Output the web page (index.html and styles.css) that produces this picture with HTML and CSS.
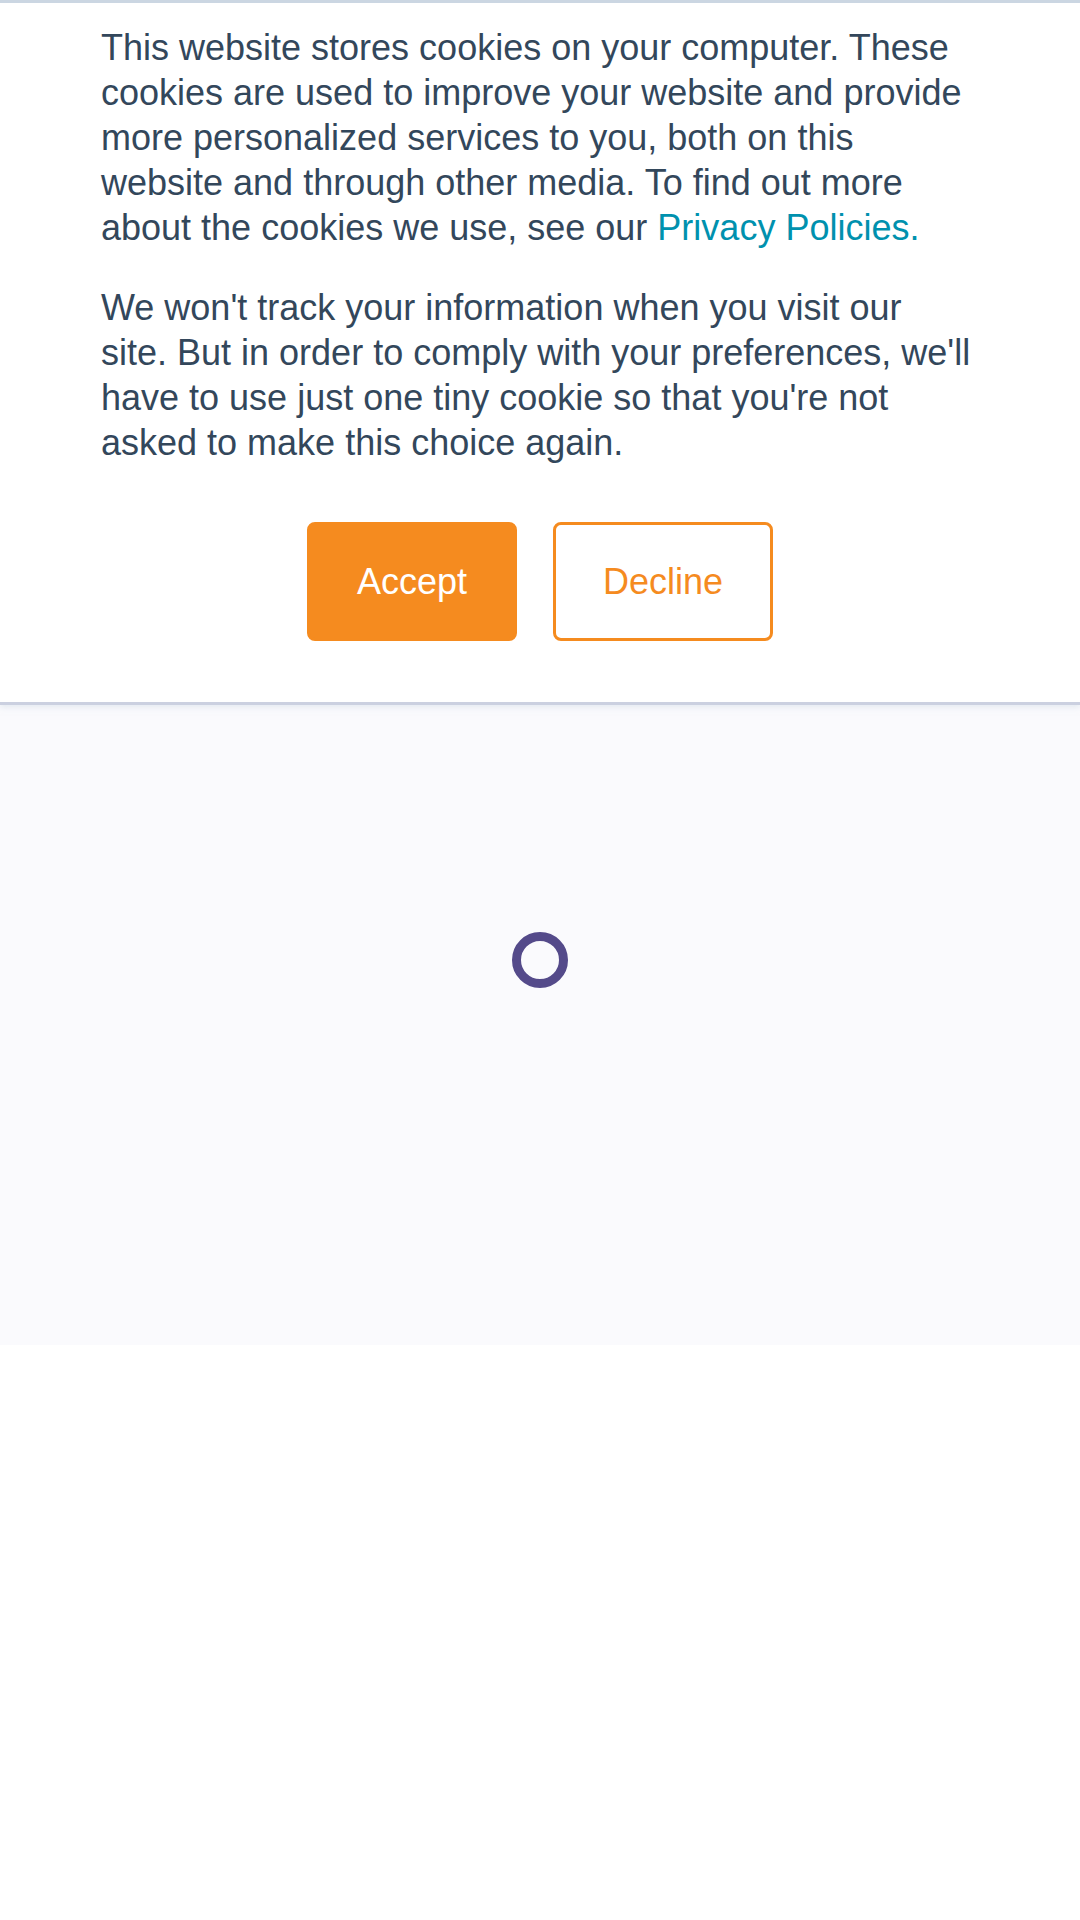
FILE: index.html
```html
<!doctype html>
<html>

<head>
    <meta charset="utf-8" />
    <meta name="viewport" content="width=device-width, initial-scale=1.0">
    <link rel="stylesheet" href="styles.css">
</head>

<body>

    <div class="main">

        <div class="cookie-banner" id="cookieBanner">
            <div class="cookie-inner">
                <p class="cookie-text">This website stores cookies on your computer. These cookies are used to improve
                    your website and provide more personalized services to you, both on this website and through other
                    media. To find out more about the cookies we use, see our <a class="link" href="#">Privacy
                        Policies.</a></p>
                <p class="cookie-text">We won't track your information when you visit our site. But in order to comply
                    with your preferences, we'll have to use just one tiny cookie so that you're not asked to make this
                    choice again.</p>
                <div class="buttons">
                    <a class="btn accept" href="#" id="acceptButton">Accept</a>
                    <a class="btn decline" href="#" id="declineButton">Decline</a>
                </div>
            </div>
        </div>

        <div class="loading-layer">
            <span class="loader"></span>
        </div>

    </div>

</body>

</html>
```

FILE: styles.css
```css
html,
body {

    margin: 0 0;
    height: 100%;
    font-family: "Liberation Sans", Arial, Helvetica, sans-serif;

}

body {

    margin: 0 0;
    background-color: white;

}

.main {
    margin: 0 0;
    background-color: white;
}

.main .cookie-banner {
    position: relative;
    z-index: 1;
    background-color: white;
    border-top: 3px solid #cbd6e2;
    border-bottom: 3px solid #cbd0e0;
    box-shadow: 0 2px 6px rgba(203, 214, 226, 0.5);
}

.main .cookie-banner .cookie-inner {
    padding: 22px 106px 61px 101px;
}

.main .cookie-banner .cookie-text {
    margin: 0 0 35px 0;
    font-size: 36px;
    line-height: 45px;
    color: #33475b;
}

.main .cookie-banner .cookie-text:last-of-type {
    margin-bottom: 0;
}

.main .cookie-banner .cookie-text .link {
    color: #0091ae;
    text-decoration: none;
}

.main .cookie-banner .buttons {
    display: flex;
    flex-direction: row;
    justify-content: center;
    gap: 36px;
    margin-top: 57px;
    padding-left: 5px;
}

.main .cookie-banner .buttons .btn {
    display: block;
    height: 113px;
    line-height: 113px;
    padding: 0 47px;
    font-size: 36px;
    border: 3px solid #f58b1f;
    border-radius: 8px;
    text-decoration: none;
}

.main .cookie-banner .buttons .accept {
    background-color: #f58b1f;
    color: white;
}

.main .cookie-banner .buttons .decline {
    background-color: white;
    color: #f58b1f;
}

.main .loading-layer {
    display: flex;
    flex-direction: column;
    align-items: center;
    height: 413px;
    padding-top: 227px;
    background-color: #fafafd;
}

.main .loading-layer .loader {
    display: block;
    width: 38px;
    height: 38px;
    border: 9px solid #544a8a;
    border-radius: 50%;
}
```
